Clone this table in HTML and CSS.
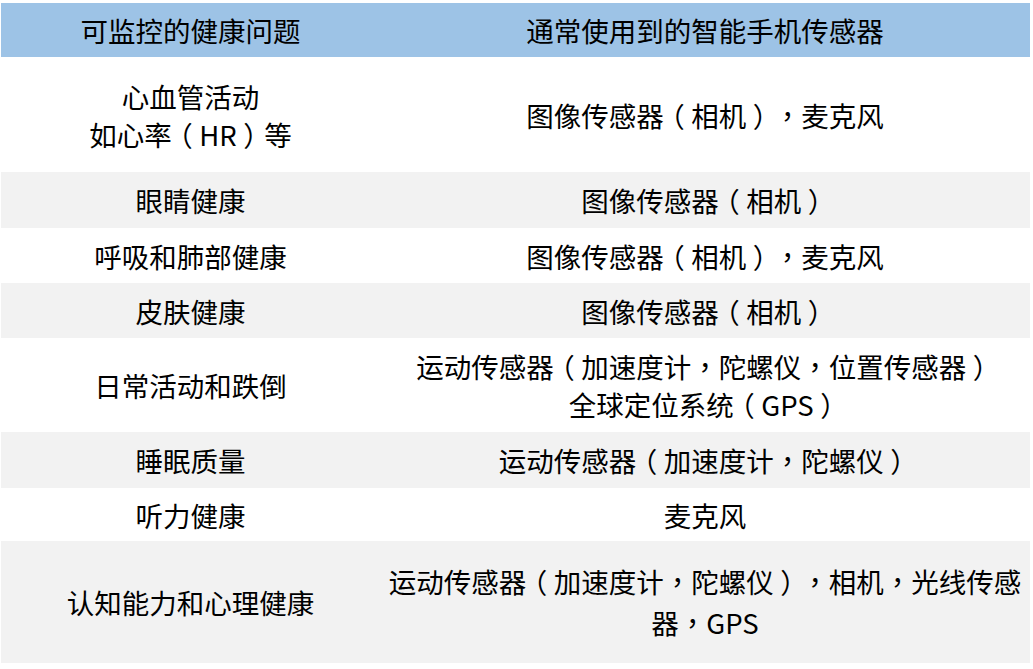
FILE: index.html
```html
<!DOCTYPE html>
<html lang="zh-CN">
<head>
<meta charset="utf-8">
<title>可监控的健康问题</title>
<link rel="stylesheet" href="styles.css">
</head>
<body>
<table class="sensor-table">
  <colgroup>
    <col class="col-left">
    <col class="col-right">
  </colgroup>
  <thead>
    <tr class="row-head">
      <th>可监控的健康问题</th>
      <th>通常使用到的智能手机传感器</th>
    </tr>
  </thead>
  <tbody>
    <tr class="row-white h115">
      <td>心血管活动<br>如心<span class="tq">率</span><span class="po">（</span>HR<span class="pc">）</span>等</td>
      <td>图像传感<span class="tq">器</span><span class="po">（</span>相机<span class="pc">）</span><span class="pu" lang="zh-TW">，</span>麦克风</td>
    </tr>
    <tr class="row-gray h56">
      <td>眼睛健康</td>
      <td>图像传感<span class="tq">器</span><span class="po">（</span>相机<span class="pc">）</span></td>
    </tr>
    <tr class="row-white h55">
      <td>呼吸和肺部健康</td>
      <td>图像传感<span class="tq">器</span><span class="po">（</span>相机<span class="pc">）</span><span class="pu" lang="zh-TW">，</span>麦克风</td>
    </tr>
    <tr class="row-gray h55">
      <td>皮肤健康</td>
      <td>图像传感<span class="tq">器</span><span class="po">（</span>相机<span class="pc">）</span></td>
    </tr>
    <tr class="row-white h94">
      <td>日常活动和跌倒</td>
      <td>运动传感<span class="tq">器</span><span class="po">（</span>加速度计<span class="pu" lang="zh-TW">，</span>陀螺仪<span class="pu" lang="zh-TW">，</span>位置传感器<span class="pc">）</span><br>全球定位系<span class="tq">统</span><span class="po">（</span>GPS<span class="pc">）</span></td>
    </tr>
    <tr class="row-gray h56">
      <td>睡眠质量</td>
      <td>运动传感<span class="tq">器</span><span class="po">（</span>加速度计<span class="pu" lang="zh-TW">，</span>陀螺仪<span class="pc">）</span></td>
    </tr>
    <tr class="row-white h53">
      <td>听力健康</td>
      <td>麦克风</td>
    </tr>
    <tr class="row-gray h122">
      <td>认知能力和心理健康</td>
      <td class="loose">运动传感<span class="tq">器</span><span class="po">（</span>加速度计<span class="pu" lang="zh-TW">，</span>陀螺仪<span class="pc">）</span><span class="pu" lang="zh-TW">，</span>相机<span class="pu" lang="zh-TW">，</span>光线传感<br>器<span class="pu" lang="zh-TW">，</span>GPS</td>
    </tr>
  </tbody>
</table>
</body>
</html>
```

FILE: styles.css
```css
html, body {
  margin: 0;
  padding: 0;
  background: #ffffff;
}

body {
  padding: 3px 0 0 1px;
  font-family: "Noto Sans CJK SC", "Noto Sans", sans-serif;
  color: #000000;
}

.sensor-table {
  width: 1029px;
  border-collapse: collapse;
  table-layout: fixed;
  font-size: 27.5px;
  line-height: 38px;
  text-spacing-trim: space-all;
}

.col-left {
  width: 379px;
}

.col-right {
  width: 650px;
}

.sensor-table th,
.sensor-table td {
  padding: 0 2px;
  text-align: center;
  vertical-align: middle;
  font-weight: normal;
  white-space: nowrap;
}

.sensor-table td.loose {
  line-height: 41px;
}

/* centred full-width comma */
.pu {
  font-family: "Noto Sans CJK TC", "Noto Sans CJK SC", sans-serif;
  text-spacing-trim: space-all;
}

/* centre the full-width parentheses in their em box */
.tq {
  letter-spacing: -0.24em;
}

.po {
  letter-spacing: 0.24em;
  text-spacing-trim: space-all;
}

.pc {
  padding-left: 0.24em;
  letter-spacing: -0.24em;
  text-spacing-trim: space-all;
}

.row-head {
  background: #9dc3e6;
  height: 54px;
}

.row-white {
  background: #ffffff;
}

.row-gray {
  background: #f2f2f2;
}

.h53 { height: 53px; }
.h55 { height: 55px; }
.h56 { height: 56px; }
.h94 { height: 94px; }
.h115 { height: 115px; }
.h122 { height: 122px; }
```
